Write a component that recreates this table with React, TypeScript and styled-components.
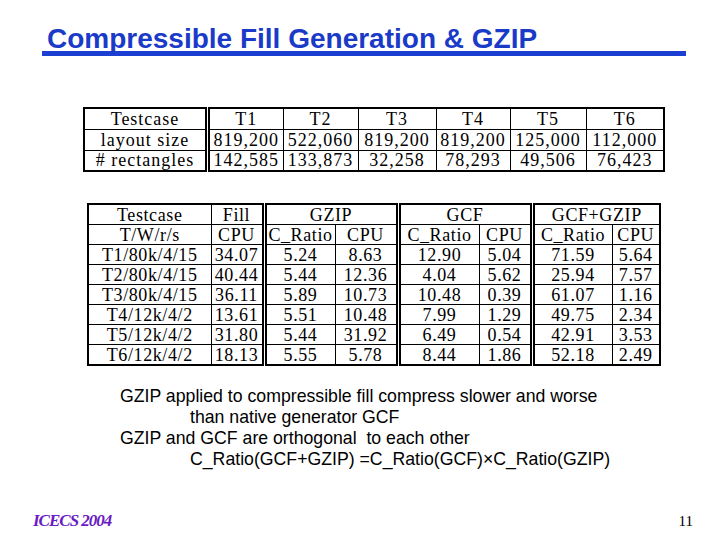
import React from 'react';
import styled, { createGlobalStyle } from 'styled-components';

const Global = createGlobalStyle`
  html, body { margin: 0; padding: 0; background: #fff; }
  #root { width: 720px; height: 540px; }
`;

const Slide = styled.div`
  width: 720px;
  height: 540px;
  box-sizing: border-box;
  padding-top: 27px;
  display: flex;
  flex-direction: column;
  background: #fff;
  overflow: hidden;
`;

const TitleBar = styled.div`
  margin-left: 42px;
  width: 644px;
  height: 24px;
  box-sizing: content-box;
  border-bottom: 5px solid #1b3fd2;
`;

const Title = styled.h1`
  margin: 0 0 0 5px;
  font: bold 28px/24px "Liberation Sans", Arial, sans-serif;
  color: #1a3ac8;
  white-space: nowrap;
`;

const DataTable = styled.table<{ $left: number; $top: number; $width: number; $spacing: number }>`
  margin-left: ${(p) => p.$left}px;
  margin-top: ${(p) => p.$top}px;
  width: ${(p) => p.$width}px;
  border-collapse: collapse;
  table-layout: fixed;
  border: 2px solid #000;
  font-family: "Liberation Serif", "Times New Roman", serif;
  font-size: 18px;
  letter-spacing: ${(p) => p.$spacing}px;
  color: #000;
`;

const Cell = styled.td<{ $dbl?: boolean; $h: number }>`
  height: ${(p) => p.$h}px;
  padding: 0;
  line-height: 1;
  text-align: center;
  vertical-align: middle;
  white-space: nowrap;
  overflow: hidden;
  border: 1.5px solid #000;
  ${(p) => (p.$dbl ? 'border-right: 5px double #000;' : '')}
`;

const Notes = styled.div`
  margin-top: 20px;
  padding-left: 120px;
  font: 17.7px/21px "Liberation Sans", Arial, sans-serif;
  color: #000;
`;

const NoteLine = styled.div<{ $indent?: boolean }>`
  padding-left: ${(p) => (p.$indent ? 70 : 0)}px;
  white-space: pre;
`;

const Footer = styled.div`
  margin-top: auto;
  height: 20px;
  padding: 0 27px 9px 33px;
  display: flex;
  justify-content: space-between;
  align-items: baseline;
`;

const Conf = styled.span`
  font: italic bold 17px/20px "Liberation Serif", "Times New Roman", serif;
  letter-spacing: -1px;
  color: #6a1bc4;
`;

const PageNo = styled.span`
  font: 15px/20px "Liberation Serif", "Times New Roman", serif;
  color: #000;
`;

const t1Cols = [123.5, 75.5, 75, 78, 74, 76, 78];
const t1Rows = [
  ['Testcase', 'T1', 'T2', 'T3', 'T4', 'T5', 'T6'],
  ['layout size', '819,200', '522,060', '819,200', '819,200', '125,000', '112,000'],
  ['# rectangles', '142,585', '133,873', '32,258', '78,293', '49,506', '76,423'],
];

const t2Cols = [123, 53, 71, 63, 81, 53, 80, 48];
const t2Dbl = [false, true, false, true, false, true, false, false];
const t2Data = [
  ['T1/80k/4/15', '34.07', '5.24', '8.63', '12.90', '5.04', '71.59', '5.64'],
  ['T2/80k/4/15', '40.44', '5.44', '12.36', '4.04', '5.62', '25.94', '7.57'],
  ['T3/80k/4/15', '36.11', '5.89', '10.73', '10.48', '0.39', '61.07', '1.16'],
  ['T4/12k/4/2', '13.61', '5.51', '10.48', '7.99', '1.29', '49.75', '2.34'],
  ['T5/12k/4/2', '31.80', '5.44', '31.92', '6.49', '0.54', '42.91', '3.53'],
  ['T6/12k/4/2', '18.13', '5.55', '5.78', '8.44', '1.86', '52.18', '2.49'],
];
const t2Sub = ['T/W/r/s', 'CPU', 'C_Ratio', 'CPU', 'C_Ratio', 'CPU', 'C_Ratio', 'CPU'];

export default function App() {
  const h1 = 19.8;
  const h2 = 19;
  return (
    <>
      <Global />
      <Slide>
        <TitleBar>
          <Title>Compressible Fill Generation &amp; GZIP</Title>
        </TitleBar>

        <DataTable $left={83} $top={51} $width={580} $spacing={1}>
          <colgroup>
            {t1Cols.map((w, i) => (
              <col key={i} style={{ width: w }} />
            ))}
          </colgroup>
          <tbody>
            {t1Rows.map((row, r) => (
              <tr key={r}>
                {row.map((c, i) => (
                  <Cell key={i} $h={h1} $dbl={i === 0}>
                    {c}
                  </Cell>
                ))}
              </tr>
            ))}
          </tbody>
        </DataTable>

        <DataTable $left={87} $top={31} $width={572} $spacing={0.6}>
          <colgroup>
            {t2Cols.map((w, i) => (
              <col key={i} style={{ width: w }} />
            ))}
          </colgroup>
          <tbody>
            <tr>
              <Cell $h={h2}>Testcase</Cell>
              <Cell $h={h2} $dbl>Fill</Cell>
              <Cell $h={h2} $dbl colSpan={2}>GZIP</Cell>
              <Cell $h={h2} $dbl colSpan={2}>GCF</Cell>
              <Cell $h={h2} colSpan={2}>GCF+GZIP</Cell>
            </tr>
            <tr>
              {t2Sub.map((c, i) => (
                <Cell key={i} $h={h2} $dbl={t2Dbl[i]}>
                  {c}
                </Cell>
              ))}
            </tr>
            {t2Data.map((row, r) => (
              <tr key={r}>
                {row.map((c, i) => (
                  <Cell key={i} $h={h2} $dbl={t2Dbl[i]}>
                    {c}
                  </Cell>
                ))}
              </tr>
            ))}
          </tbody>
        </DataTable>

        <Notes>
          <NoteLine>GZIP applied to compressible fill compress slower and worse</NoteLine>
          <NoteLine $indent>than native generator GCF</NoteLine>
          <NoteLine>GZIP and GCF are orthogonal  to each other</NoteLine>
          <NoteLine $indent>C_Ratio(GCF+GZIP) =C_Ratio(GCF)×C_Ratio(GZIP)</NoteLine>
        </Notes>

        <Footer>
          <Conf>ICECS 2004</Conf>
          <PageNo>11</PageNo>
        </Footer>
      </Slide>
    </>
  );
}
